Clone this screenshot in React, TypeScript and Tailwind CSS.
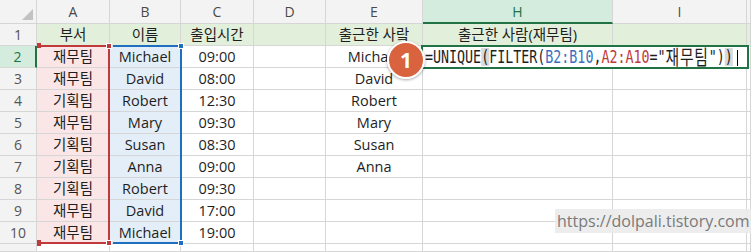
import React from "react";

const deptCol = ["재무팀", "재무팀", "기획팀", "재무팀", "기획팀", "기획팀", "기획팀", "재무팀", "재무팀"];
const nameCol = ["Michael", "David", "Robert", "Mary", "Susan", "Anna", "Robert", "David", "Michael"];
const timeCol = ["09:00", "08:00", "12:30", "09:30", "08:30", "09:00", "09:30", "17:00", "19:00"];
const uniqueCol = ["Michael", "David", "Robert", "Mary", "Susan", "Anna"];

const line = "border-r border-b border-[#d6d6d6]";
const cellBase = "flex items-center justify-center whitespace-nowrap overflow-hidden text-[14.5px] text-[#1e1e1e] " + line;
const headBase = "flex items-center justify-center bg-[#f3f3f3] text-[14px] text-[#4a4a4a] border-r border-b border-[#d6d6d6]";

function Cell({ children, className = "" }: { children?: React.ReactNode; className?: string }) {
  return <div className={cellBase + " " + className}>{children}</div>;
}

function RowHead({ n, active }: { n: number | string; active?: boolean }) {
  if (active) {
    return (
      <div className="flex items-center justify-center bg-[#d3ecdd] text-[14px] text-[#217346] border-b border-[#d6d6d6] border-r-2 border-r-[#217346]">
        {n}
      </div>
    );
  }
  return <div className="flex items-center justify-center bg-[#f3f3f3] text-[14px] text-[#555] border-r border-b border-[#d6d6d6]">{n}</div>;
}

function Formula() {
  return (
    <div className="absolute left-[421px] top-[45px] w-[328px] h-[24px] border-2 border-[#217346] bg-white">
      <div className="absolute left-[2px] top-0 h-full flex items-center">
        <span className="inline-flex items-center origin-left scale-x-[0.74] font-['DejaVu_Sans_Mono','Noto_Sans_CJK_KR',monospace] text-[18px] leading-none text-[#1e1e1e] whitespace-pre">
          <span>=UNIQUE</span>
          <span className="bg-[#d9d9d9]">(</span>
          <span>FILTER(</span>
          <span className="text-[#3a6fc0]">B2:B10</span>
          <span>,</span>
          <span className="text-[#c0393b]">A2:A10</span>
          <span>="</span>
          <span className="font-['Noto_Sans_CJK_KR',sans-serif] text-[20px] tracking-[1px]">재무팀</span>
          <span>")</span>
          <span className="bg-[#d9d9d9]">)</span>
        </span>
      </div>
      <div className="absolute left-[314px] top-[3px] w-px h-[16px] bg-black" />
    </div>
  );
}

function RangeMarks() {
  return (
    <>
      {/* red range A2:A10 */}
      <div className="absolute left-[38px] top-[45px] w-[71px] h-[2px] bg-[#c0393b]" />
      <div className="absolute left-[108px] top-[45px] w-[2px] h-[199px] bg-[#c0393b]" />
      <div className="absolute left-[38px] top-[242px] w-[71px] h-[2px] bg-[#c0393b]" />
      <div className="absolute left-[106px] top-[43px] w-[6px] h-[6px] bg-[#c0393b] border border-white" />
      <div className="absolute left-[106px] top-[240px] w-[6px] h-[6px] bg-[#c0393b] border border-white" />
      <div className="absolute left-[37px] top-[43px] w-[4px] h-[5px] bg-[#c0393b]" />
      <div className="absolute left-[37px] top-[240px] w-[4px] h-[6px] bg-[#c0393b]" />
      {/* blue range B2:B10 */}
      <div className="absolute left-[113px] top-[45px] w-[68px] h-[2px] bg-[#1f6fc0]" />
      <div className="absolute left-[180px] top-[45px] w-[2px] h-[199px] bg-[#1f6fc0]" />
      <div className="absolute left-[113px] top-[242px] w-[68px] h-[2px] bg-[#1f6fc0]" />
      <div className="absolute left-[178px] top-[43px] w-[6px] h-[6px] bg-[#1f6fc0] border border-white" />
      <div className="absolute left-[178px] top-[240px] w-[6px] h-[6px] bg-[#1f6fc0] border border-white" />
    </>
  );
}

export default function App() {
  return (
    <div className="relative w-[751px] h-[252px] overflow-hidden bg-white font-['Open_Sans','Noto_Sans_CJK_KR',sans-serif]">
      <div className="grid h-full grid-cols-[37px_73px_71px_73px_72px_97px_190px_134px_1fr] grid-rows-[24px_repeat(10,22px)_1fr]">
        {/* column headers */}
        <div className="relative bg-[#f3f3f3] border-r border-b border-[#d6d6d6]">
          <svg className="absolute left-0 top-0" width="37" height="24" viewBox="0 0 37 24">
            <polygon points="22,20 33,9 33,20" fill="#c2c2c2" />
          </svg>
        </div>
        <div className={headBase}>A</div>
        <div className={headBase}>B</div>
        <div className={headBase}>C</div>
        <div className={headBase}>D</div>
        <div className={headBase}>E</div>
        <div className="flex items-center justify-center bg-[#d3ecdd] text-[14px] text-[#217346] border-r border-[#d6d6d6] border-b-2 border-b-[#217346]">H</div>
        <div className={headBase}>I</div>
        <div className={headBase} />

        {/* row 1 */}
        <RowHead n={1} />
        <Cell className="bg-[#e2efda]">부서</Cell>
        <Cell className="bg-[#e2efda]">이름</Cell>
        <Cell className="bg-[#e2efda]">출입시간</Cell>
        <Cell className="bg-[#e2efda]" />
        <Cell className="bg-[#e2efda]">출근한 사랔</Cell>
        <Cell className="bg-[#e2efda]">출근한 사람(재무팀)</Cell>
        <Cell className="bg-[#e2efda]" />
        <Cell className="bg-[#e2efda]" />

        {/* rows 2-10 */}
        {deptCol.map((dept, i) => (
          <React.Fragment key={i}>
            <RowHead n={i + 2} active={i === 0} />
            <Cell className="bg-[#fae6e6]">{dept}</Cell>
            <Cell className="bg-[#e4eef8]">{nameCol[i]}</Cell>
            <Cell>{timeCol[i]}</Cell>
            <Cell />
            <Cell>{uniqueCol[i] ?? ""}</Cell>
            <Cell />
            <Cell />
            <Cell />
          </React.Fragment>
        ))}

        {/* row 11 (partial) */}
        <RowHead n="" />
        <Cell />
        <Cell />
        <Cell />
        <Cell />
        <Cell />
        <Cell />
        <Cell />
        <Cell />
      </div>

      <RangeMarks />
      <Formula />

      {/* step badge */}
      <div className="absolute left-[387px] top-[41px] w-[38px] h-[38px] rounded-full bg-[#d9623f] border-2 border-white shadow-[0_1px_3px_rgba(0,0,0,0.35)] flex items-center justify-center">
        <span className="text-white text-[21px] font-bold leading-none">1</span>
      </div>

      {/* watermark */}
      <div className="absolute left-[555px] top-[209px] h-[24px] px-[2px] bg-[#ebebeb]/90 flex items-center">
        <span className="text-[16px] text-[#7a7a7a] leading-none">https://dolpali.tistory.com</span>
      </div>
    </div>
  );
}
